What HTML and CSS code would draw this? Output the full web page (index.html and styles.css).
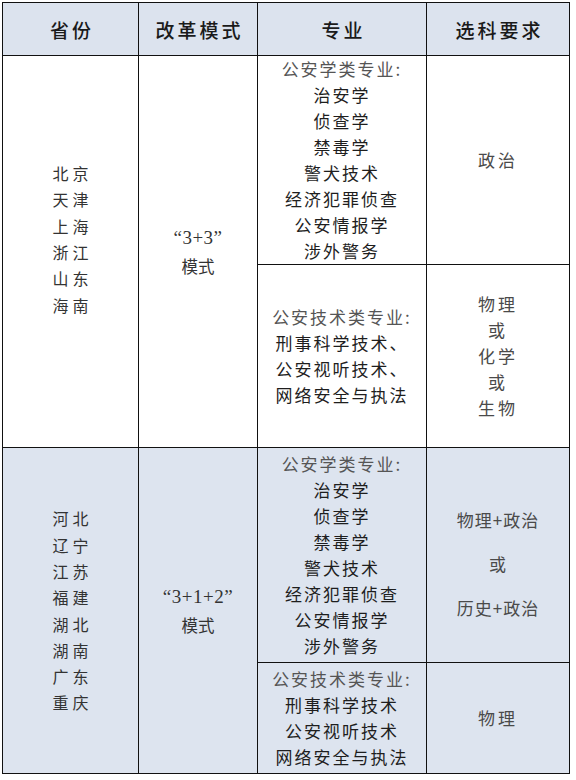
FILE: index.html
```html
<!DOCTYPE html>
<html lang="zh">
<head>
<meta charset="utf-8">
<link rel="stylesheet" href="styles.css">
</head>
<body>
<table class="grid">
  <colgroup>
    <col class="c1"><col class="c2"><col class="c3"><col class="c4">
  </colgroup>
  <thead>
    <tr class="head">
      <th>省份</th><th>改革模式</th><th>专业</th><th>选科要求</th>
    </tr>
  </thead>
  <tbody class="sec1">
    <tr class="r1">
      <td rowspan="2" class="prov up">北京<br>天津<br>上海<br>浙江<br>山东<br>海南</td>
      <td rowspan="2" class="mode"><span class="num">“3+3”</span><br>模式</td>
      <td class="major"><span class="cat">公安学类专业:</span><br>治安学<br>侦查学<br>禁毒学<br>警犬技术<br>经济犯罪侦查<br>公安情报学<br>涉外警务</td>
      <td class="req">政治</td>
    </tr>
    <tr class="r2">
      <td class="major tech"><span class="cat">公安技术类专业:</span><br>刑事科学技术、<br>公安视听技术、<br>网络安全与执法</td>
      <td class="req">物理<br>或<br>化学<br>或<br>生物</td>
    </tr>
  </tbody>
  <tbody class="sec2">
    <tr class="r3">
      <td rowspan="2" class="prov">河北<br>辽宁<br>江苏<br>福建<br>湖北<br>湖南<br>广东<br>重庆</td>
      <td rowspan="2" class="mode"><span class="num">“3+1+2”</span><br>模式</td>
      <td class="major"><span class="cat">公安学类专业:</span><br>治安学<br>侦查学<br>禁毒学<br>警犬技术<br>经济犯罪侦查<br>公安情报学<br>涉外警务</td>
      <td class="req combo"><div>物理+政治</div><div>或</div><div>历史+政治</div></td>
    </tr>
    <tr class="r4">
      <td class="major tech"><span class="cat">公安技术类专业:</span><br>刑事科学技术<br>公安视听技术<br>网络安全与执法</td>
      <td class="req">物理</td>
    </tr>
  </tbody>
</table>
</body>
</html>
```

FILE: styles.css
```css
html, body {
  margin: 0;
  padding: 0;
  background: #ffffff;
}
body {
  padding: 2px 0 0 2px;
  font-family: "Noto Sans CJK SC", "Noto Sans", sans-serif;
  color: #2a2a2a;
}
.grid {
  border-collapse: collapse;
  table-layout: fixed;
  width: 567px;
}
.c1 { width: 136px; }
.c2 { width: 119px; }
.c3 { width: 169px; }
.c4 { width: 143px; }
.grid th, .grid td {
  border: 1.4px solid #111;
  padding: 0;
  text-align: center;
  vertical-align: middle;
}
.head {
  height: 53px;
  background: #dce3ee;
}
.head th {
  font-size: 19px;
  font-weight: 500;
  letter-spacing: 3px;
  color: #1a1a1a;
  padding-left: 3px;
}
.sec2 td { background: #dde4ef; }
.r1 { height: 209px; }
.r2 { height: 183px; }
.r3 { height: 215px; }
.r4 { height: 111px; }
.prov {
  font-size: 16px;
  line-height: 26.3px;
  letter-spacing: 4px;
  padding-left: 4px !important;
  color: #333;
}
.prov.up {
  padding-bottom: 25px !important;
}
.mode {
  font-size: 16.5px;
  line-height: 28px;
  color: #333;
}
.num {
  font-family: "Liberation Serif", "Noto Sans CJK SC", serif;
  font-size: 19px;
  letter-spacing: 0.5px;
}
.major {
  font-size: 17px;
  line-height: 25.9px;
  letter-spacing: 2px;
  color: #1e1e1e;
}
.cat {
  color: #555;
}
.req {
  font-size: 17px;
  line-height: 26px;
  letter-spacing: 3px;
  color: #4a4a4a;
}
.combo {
  padding-top: 18px !important;
}
.combo div {
  line-height: 26px;
  letter-spacing: 1px;
}
.combo div + div {
  margin-top: 18px;
}
```
